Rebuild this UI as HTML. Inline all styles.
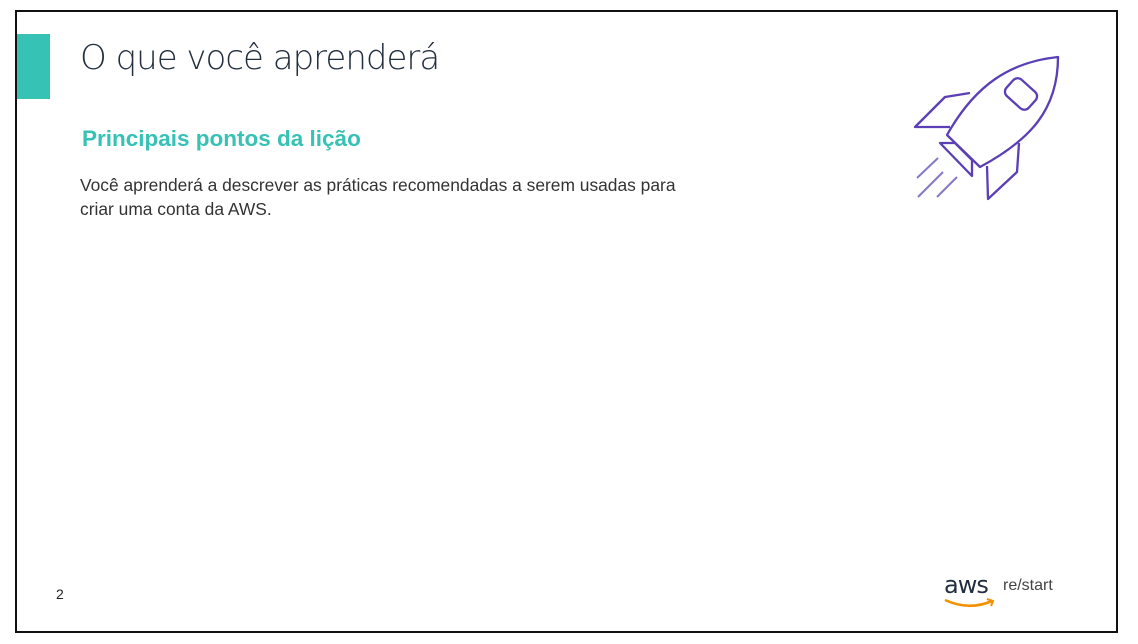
<!DOCTYPE html>
<html><head><meta charset="utf-8"><style>
body{margin:0;width:1138px;height:644px;background:#fff;position:relative;overflow:hidden;font-family:"Liberation Sans",sans-serif}
.frame{position:absolute;left:15px;top:10px;width:1099px;height:619px;border:2px solid #111;box-sizing:content-box}
.bar{position:absolute;left:17px;top:34px;width:33px;height:65px;background:#36c2b4}
h1{position:absolute;left:80px;top:38px;margin:0;font-size:34px;color:#232f3e;font-family:"DejaVu Sans","Liberation Sans",sans-serif;font-weight:200;letter-spacing:-1px}
h2{position:absolute;left:82px;top:126px;margin:0;font-size:22.5px;font-weight:bold;color:#36c2b4}
p{position:absolute;left:80px;top:173px;margin:0;font-size:17.4px;line-height:24px;color:#333;width:620px}
.num{position:absolute;left:56px;top:586px;font-size:14px;color:#222}
.logo{position:absolute;left:944px;top:570px}
.rs{position:absolute;left:1003px;top:577px;font-size:16px;color:#444}
</style></head><body>
<div class="frame"></div>
<div class="bar"></div>
<h1>O que você aprenderá</h1>
<h2>Principais pontos da lição</h2>
<p>Você aprenderá a descrever as práticas recomendadas a serem usadas para criar uma conta da AWS.</p>
<div class="num">2</div>
<svg class="logo" width="56" height="42" viewBox="0 0 56 42">
<text x="0" y="23" font-family="DejaVu Sans,sans-serif" font-size="24" fill="#232f3e" letter-spacing="-1">aws</text>
<path d="M1 30 Q25 41 48 31" stroke="#f29100" stroke-width="2.6" fill="none"/>
<path d="M43 29 L49 31 L47 36" stroke="#f29100" stroke-width="2" fill="none"/>
</svg>
<div class="rs">re/start</div>
<svg style="position:absolute;left:0;top:0" width="1138" height="644">
<g fill="none" stroke="#5a3fb5" stroke-width="2.3" stroke-linejoin="round">
<path d="M1058 57 C1010 62 975 85 947 135 L980 167 C1030 140 1058 110 1058 57 Z"/>
<rect x="1006" y="83" width="30" height="22" rx="6" transform="rotate(42 1021 94)"/>
<path d="M970 93 L945 97 L915 127 L950 127"/>
<path d="M940 143 L955 143 L972 160 L972 176 Z"/>
<path d="M987 166 L988 199 L1017 172 L1019 143"/>
</g>
<g stroke="#8878c8" stroke-width="2">
<line x1="917" y1="178" x2="938" y2="158"/>
<line x1="918" y1="197" x2="943" y2="172"/>
<line x1="937" y1="197" x2="957" y2="177"/>
</g>
</svg>
</body></html>
